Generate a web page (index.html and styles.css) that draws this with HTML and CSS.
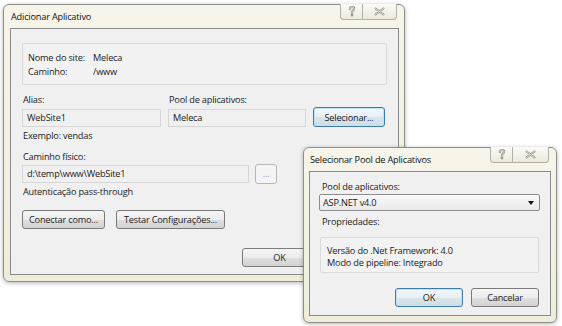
FILE: index.html
```html
<!DOCTYPE html>
<html lang="pt-BR">
<head>
  <meta charset="UTF-8" />
  <title>Adicionar Aplicativo</title>
  <link rel="stylesheet" href="styles.css">
</head>
<body>
  <div class="desktop">

    <div class="window window-main">
      <div class="titlebar">
        <span class="title">Adicionar Aplicativo</span>
        <div class="caption-buttons">
          <span class="cap-btn cap-help">
            <svg width="8" height="11" viewBox="0 0 8 11">
              <path class="glyph-out" d="M1.8 3.2C1.8 1.6 2.8 1 4 1S6.2 1.7 6.2 2.8C6.2 4.3 4 4.4 4 6.4"/>
              <circle class="glyph-out" cx="4" cy="9" r="0.4"/>
              <path class="glyph-in" d="M1.8 3.2C1.8 1.6 2.8 1 4 1S6.2 1.7 6.2 2.8C6.2 4.3 4 4.4 4 6.4"/>
            </svg>
          </span>
          <span class="cap-btn cap-close">
            <svg width="13" height="9" viewBox="0 0 13 9">
              <path class="glyph-out" d="M2.5 1.5L10.5 7.5M10.5 1.5L2.5 7.5"/>
              <path class="glyph-in" d="M2.5 1.5L10.5 7.5M10.5 1.5L2.5 7.5"/>
            </svg>
          </span>
        </div>
      </div>
      <div class="client client-main">
        <div class="info-box">
          <span>Nome do site:</span><span>Meleca</span>
          <span>Caminho:</span><span>/www</span>
        </div>

        <div class="field-grid">
          <label>Alias:</label>
          <label>Pool de aplicativos:</label>
          <span></span>
          <div class="textbox">WebSite1</div>
          <div class="textbox">Meleca</div>
          <button class="btn btn-default btn-select">Selecionar...</button>
        </div>

        <div class="hint">Exemplo: vendas</div>
        <label class="field-label">Caminho físico:</label>
        <div class="path-row">
          <div class="textbox textbox-path">d:\temp\www\WebSite1</div>
          <button class="btn btn-disabled">...</button>
        </div>
        <div class="hint">Autenticação pass-through</div>

        <div class="action-row">
          <button class="btn btn-connect">Conectar como...</button>
          <button class="btn btn-test">Testar Configurações...</button>
        </div>

        <div class="footer-row">
          <button class="btn btn-ok">OK</button>
        </div>
      </div>
    </div>

    <div class="window window-pool">
      <div class="titlebar">
        <span class="title">Selecionar Pool de Aplicativos</span>
        <div class="caption-buttons">
          <span class="cap-btn cap-help">
            <svg width="8" height="11" viewBox="0 0 8 11">
              <path class="glyph-out" d="M1.8 3.2C1.8 1.6 2.8 1 4 1S6.2 1.7 6.2 2.8C6.2 4.3 4 4.4 4 6.4"/>
              <circle class="glyph-out" cx="4" cy="9" r="0.4"/>
              <path class="glyph-in" d="M1.8 3.2C1.8 1.6 2.8 1 4 1S6.2 1.7 6.2 2.8C6.2 4.3 4 4.4 4 6.4"/>
            </svg>
          </span>
          <span class="cap-btn cap-close cap-close-wide">
            <svg width="13" height="9" viewBox="0 0 13 9">
              <path class="glyph-out" d="M2.5 1.5L10.5 7.5M10.5 1.5L2.5 7.5"/>
              <path class="glyph-in" d="M2.5 1.5L10.5 7.5M10.5 1.5L2.5 7.5"/>
            </svg>
          </span>
        </div>
      </div>
      <div class="client client-pool">
        <label class="field-label indent">Pool de aplicativos:</label>
        <div class="combo">
          <span>ASP.NET v4.0</span>
          <span class="combo-arrow"></span>
        </div>
        <label class="field-label indent props-label">Propriedades:</label>
        <div class="props-box">
          <div>Versão do .Net Framework: 4.0</div>
          <div>Modo de pipeline: Integrado</div>
        </div>
        <div class="dialog-buttons">
          <button class="btn btn-default btn-pool">OK</button>
          <button class="btn btn-pool">Cancelar</button>
        </div>
      </div>
    </div>

  </div>
</body>
</html>
```

FILE: styles.css
```css
body { margin: 0; background: #fff; font-family: "Open Sans", "Liberation Sans", sans-serif; font-size: 9.2px; letter-spacing: -0.2px; color: #1b1b1b; }
.desktop { position: relative; width: 562px; height: 326px; overflow: hidden; }

/* window frame */
.window { position: absolute; display: flex; flex-direction: column; box-sizing: border-box; padding: 0 5px 6px 6px; background: linear-gradient(#f7f5ea, #efecdb); border: 1px solid #8e8d86; border-radius: 6px; box-shadow: 0 1px 4px rgba(0,0,0,0.3); }
.window-main { left: 3px; top: 4px; width: 402px; height: 278px; }
.window-pool { left: 303px; top: 147px; width: 254px; height: 176px; padding-left: 5px; }

.titlebar { position: relative; height: 23px; display: flex; align-items: center; }
.title { padding-left: 1px; margin-top: -1px; color: #111; }
.caption-buttons { position: absolute; top: -1px; right: 2px; display: flex; }
.cap-btn { display: flex; align-items: center; justify-content: center; height: 15px; border: 1px solid #b3b1a5; border-top: none; background: linear-gradient(#fbfaf4, #eceadc); }
.cap-help { width: 21px; border-radius: 0 0 0 4px; }
.cap-close { width: 33px; border-left: none; border-radius: 0 0 4px 0; }
.cap-close-wide { width: 35px; }
.glyph-out { fill: none; stroke: #85857f; stroke-width: 2; stroke-linecap: round; }
.glyph-in { fill: none; stroke: #fbfbf6; stroke-width: 0.8; stroke-linecap: round; }

.client { flex: 1; display: flex; flex-direction: column; background: #f0f0f0; border: 1px solid #8a8a8a; }
.client-main { padding: 14px 11px 0 11px; }
.client-pool { padding: 8px 10px 0 9px; }

/* content */
label, .hint, .field-label { display: block; line-height: 14px; }
.info-box { display: grid; grid-template-columns: 65px 1fr; line-height: 14px; padding: 7px 5px 5px 5px; border: 1px solid #dadada; border-radius: 2px; background: #f2f2f2; }

.field-grid { display: grid; grid-template-columns: 139px 138px 72px; column-gap: 7px; margin-top: 8px; align-items: center; }
.field-grid label { padding-left: 1px; margin-bottom: 1px; }
.textbox { box-sizing: border-box; height: 18px; line-height: 16px; padding: 0 4px; border: 1px solid #d6d6d6; background: #f0f0f0; white-space: nowrap; }
.hint { padding-left: 1px; margin-top: 2px; }
.client-main .field-label { padding-left: 1px; margin-top: 7px; }
.path-row { display: flex; align-items: center; gap: 6px; margin-top: 0; }
.textbox-path { width: 227px; }
.path-row + .hint { margin-top: 1px; }

.btn { box-sizing: border-box; font: inherit; letter-spacing: inherit; color: #1b1b1b; padding: 0; border: 1px solid #7a7a7a; border-radius: 3px; background: linear-gradient(#f5f5f5 0%, #ececec 50%, #dfdfdf 51%, #d3d3d3 100%); }
.btn-default { border-color: #3d7bad; box-shadow: inset 0 0 0 1px #bfe2f5; background: linear-gradient(#f1f7fb 0%, #e8f0f5 50%, #d9e5ec 51%, #cfdde6 100%); }
.btn-select { height: 20px; margin-top: -1px; }
.btn-disabled { width: 22px; height: 20px; color: #9a9a9a; border-color: #b5b8ba; background: #f4f4f4; line-height: 12px; }
.action-row { display: flex; gap: 11px; margin-top: 11px; }
.btn-connect { width: 83px; height: 19px; }
.btn-test { width: 109px; height: 19px; }
.footer-row { display: flex; margin-top: 19px; padding-left: 220px; }
.btn-ok { width: 75px; height: 19px; }

.indent { padding-left: 3px; }
.combo { box-sizing: border-box; height: 17px; display: flex; align-items: center; justify-content: space-between; padding: 0 5px 0 3px; border: 1px solid #8c8c8c; border-radius: 2px; background: linear-gradient(#f9f9f9, #e9e9e9); }
.combo-arrow { width: 0; height: 0; border-left: 3.5px solid transparent; border-right: 3.5px solid transparent; border-top: 4px solid #111; }
.props-label { margin-top: 4px; }
.props-box { box-sizing: border-box; height: 36px; margin: 8px 1px 0 1px; padding: 7px 6px 0 6px; line-height: 11.5px; border: 1px solid #dadada; border-radius: 2px; background: #f2f2f2; }
.dialog-buttons { display: flex; justify-content: flex-end; gap: 8px; margin-top: 15px; padding-right: 1px; }
.btn-pool { width: 68px; height: 19px; }
```
